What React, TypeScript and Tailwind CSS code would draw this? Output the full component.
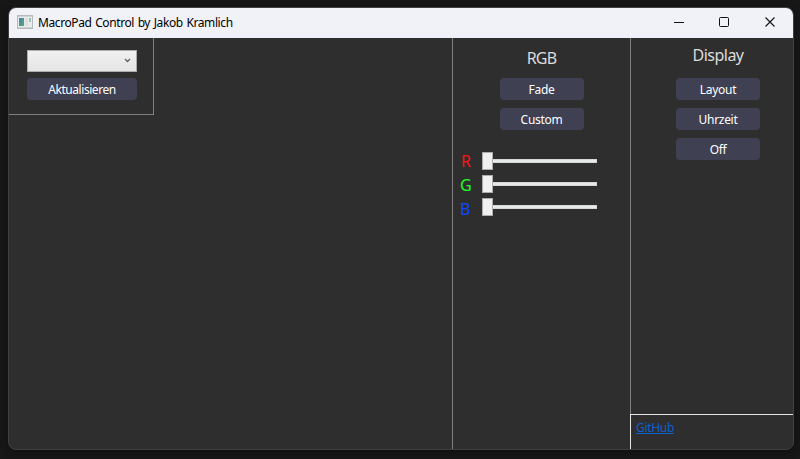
import type { ReactNode } from "react";

function PadButton({ children, wide = false }: { children: ReactNode; wide?: boolean }) {
  return (
    <button
      className={`block h-[22px] shrink-0 rounded bg-[#3f4153] text-center text-[12px] leading-[23px] text-white ${wide ? "w-[110px] tracking-[-0.45px]" : "w-[84px] tracking-[-0.3px]"}`}
    >
      {children}
    </button>
  );
}

function ChannelSlider({ label, color }: { label: string; color: string }) {
  return (
    <div className="flex h-[23px] items-start">
      <span className={`w-[22px] text-[16px] ${color}`}>{label}</span>
      <div className="flex h-[18px] items-center">
        <div className="h-[18px] w-[11px] border border-[#acacac] bg-[#f0f0f0]" />
        <div className="h-1 w-[104px] border border-l-0 border-[#d6d6d6] bg-[#e7eaea]" />
      </div>
    </div>
  );
}

function AppIcon() {
  return (
    <svg width="16" height="14" viewBox="0 0 16 14" className="mb-0.5 shrink-0">
      <defs>
        <linearGradient id="pane" x1="0" y1="0" x2="1" y2="1">
          <stop offset="0" stopColor="#477fae" />
          <stop offset="1" stopColor="#57a878" />
        </linearGradient>
      </defs>
      <rect x="0.5" y="0.5" width="15" height="13" fill="#e9ecec" stroke="#b4babc" />
      <path d="M1 1.5h14" stroke="#cdd2d4" />
      <rect x="2" y="3" width="5" height="8" fill="url(#pane)" />
      <rect x="8" y="3" width="3" height="8" fill="#dededb" />
      <rect x="12" y="3" width="2" height="4" fill="#9fc5bb" />
      <path d="M1 12.5h14" stroke="#cdd2d4" />
    </svg>
  );
}

export default function App() {
  return (
    <div className="h-[459px] w-[800px] overflow-hidden bg-[#171717] pl-2 pt-[7px] font-['Noto_Sans','Open_Sans',sans-serif]">
      <div className="flex h-[443px] w-[786px] flex-col overflow-hidden rounded-lg border border-[#414141] bg-[#2e2e2e] shadow-[0_2px_8px_rgba(0,0,0,0.35)]">
        <header className="flex h-[30px] shrink-0 items-center bg-[#f0f2f8] pl-2">
          <AppIcon />
          <span className="ml-[5px] w-[200px] whitespace-nowrap text-[12px] leading-[30px] tracking-[-0.4px] text-black [word-spacing:0.9px]">
            MacroPad Control by Jakob Kramlich
          </span>
          <svg width="104" height="12" viewBox="0 0 104 12" className="mb-0.5 ml-auto mr-4" fill="none" stroke="#111">
            <path d="M1 6.5h10" />
            <rect x="46.5" y="1.5" width="9" height="9" rx="1" />
            <path d="M92.5 1.5l9 9M101.5 1.5l-9 9" strokeWidth="1.1" />
          </svg>
        </header>

        <main className="flex min-h-0 flex-1">
          <section className="w-[443px]">
            <div className="flex h-[77px] w-[145px] flex-col gap-1.5 border-b border-r border-[#808080] pl-[18px] pt-3">
              <div className="flex h-[22px] w-[110px] items-center justify-end border border-[#acacac] bg-linear-to-b from-[#f0f0f0] to-[#e5e5e5] pb-0.5 pr-[5px]">
                <svg width="7" height="5" viewBox="0 0 7 5" fill="none" stroke="#606060" strokeWidth="1.3">
                  <path d="M1 1l2.5 2.5L6 1" />
                </svg>
              </div>
              <PadButton wide>Aktualisieren</PadButton>
            </div>
          </section>

          <section className="w-[178px] border-l border-[#808080]">
            <div className="flex flex-col items-center gap-2">
              <h2 className="h-8 pt-[9px] text-[16px] leading-[22px] tracking-[-0.8px] text-[#dcdcdc]">RGB</h2>
              <PadButton>Fade</PadButton>
              <PadButton>Custom</PadButton>
            </div>
            <div className="pl-[7px] pt-[22px]">
              <ChannelSlider label="R" color="pl-px leading-[19px] text-[#ff1414]" />
              <ChannelSlider label="G" color="leading-[21px] text-[#20ff20]" />
              <ChannelSlider label="B" color="leading-[23px] text-[#1446ff]" />
            </div>
          </section>

          <section className="flex w-[163px] flex-col">
            <div className="flex flex-1 flex-col items-center gap-2 border-l border-[#808080] pl-3">
              <h2 className="h-8 pt-[6px] text-[16px] leading-[22px] tracking-[-0.5px] text-[#dcdcdc]">Display</h2>
              <PadButton>Layout</PadButton>
              <PadButton>Uhrzeit</PadButton>
              <PadButton>Off</PadButton>
            </div>
            <footer className="h-[35px] border-l border-t border-[#e4e6e4] pl-[5px] pt-[5px] text-[12px] leading-4 tracking-[-0.3px]">
              <a href="#" className="text-[#0b62cc] underline">GitHub</a>
            </footer>
          </section>
        </main>
      </div>
    </div>
  );
}
